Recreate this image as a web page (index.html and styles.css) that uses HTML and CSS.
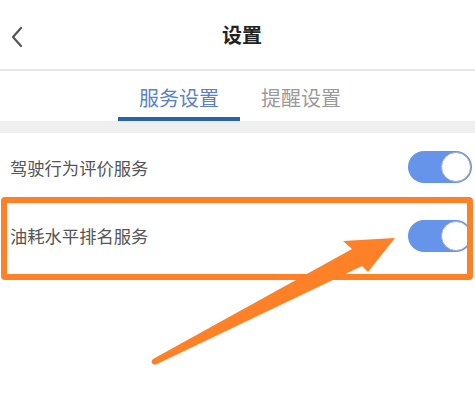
FILE: index.html
```html
<!DOCTYPE html>
<html lang="zh">
<head>
<meta charset="utf-8">
<link rel="stylesheet" href="styles.css">
</head>
<body>
<div class="page">
  <header class="topbar">
    <svg class="back" width="14" height="22" viewBox="0 0 14 22"><path d="M11 2 L3 11 L11 20" fill="none" stroke="#555" stroke-width="2.2" stroke-linecap="round" stroke-linejoin="round"/></svg>
    <h1 class="title">设置</h1>
  </header>
  <nav class="tabs">
    <div class="tab active">服务设置</div>
    <div class="tab">提醒设置</div>
  </nav>
  <div class="band"></div>
  <section class="list">
    <div class="row">
      <span class="label">驾驶行为评价服务</span>
      <span class="switch"><span class="knob"></span></span>
    </div>
    <div class="row">
      <span class="label">油耗水平排名服务</span>
      <span class="switch"><span class="knob"></span></span>
    </div>
  </section>
  <div class="highlight"></div>
  <svg class="arrow" width="475" height="409" viewBox="0 0 475 409">
    <path d="M395 238 L343 241 L352 249 L153 359 Q150 362 153 364 Q155 365 157 364 L362 266 L368 272 Z" fill="#ff8127"/>
  </svg>
</div>
</body>
</html>
```
FILE: styles.css
```css
html, body {
  margin: 0;
  padding: 0;
  background: #fff;
}
body {
  font-family: "Noto Sans CJK SC", "Noto Sans", sans-serif;
}
.page {
  position: relative;
  width: 475px;
  height: 409px;
  overflow: hidden;
}
.topbar {
  position: relative;
  height: 69px;
  display: flex;
  align-items: center;
  justify-content: center;
  border-bottom: 2px solid #e6e6e8;
}
.back {
  position: absolute;
  left: 10px;
  top: 26px;
}
.title {
  margin: 0 0 0 9px;
  font-size: 20px;
  font-weight: 700;
  color: #222;
  line-height: 1;
}
.tabs {
  height: 50px;
  display: flex;
  justify-content: center;
  padding-left: 5px;
}
.tab {
  width: 122px;
  box-sizing: border-box;
  text-align: center;
  font-size: 20px;
  line-height: 1;
  padding-top: 17px;
  color: #9a9a9a;
}
.tab.active {
  color: #5a80c6;
  border-bottom: 4px solid #2b5fb2;
}
.band {
  height: 12px;
  background: #efefef;
}
.list {
  display: flex;
  flex-direction: column;
}
.row {
  height: 69px;
  display: flex;
  align-items: center;
  justify-content: space-between;
  padding: 0 3px 0 10px;
}
.row:first-child {
  height: 68px;
}
.label {
  font-size: 17.3px;
  color: #555;
  letter-spacing: 0;
}
.switch {
  position: relative;
  width: 64px;
  height: 32px;
  border-radius: 16px;
  background: #6594ea;
  display: flex;
  justify-content: flex-end;
  align-items: center;
}
.knob {
  width: 30px;
  height: 30px;
  border-radius: 50%;
  background: #fff;
  border: 1px solid #a9adb6;
  box-sizing: border-box;
  margin-right: 1px;
}
.highlight {
  position: absolute;
  left: 1px;
  top: 197px;
  width: 472px;
  height: 83px;
  box-sizing: border-box;
  border: 6px solid #ff8127;
  border-radius: 4px;
}
.arrow {
  position: absolute;
  left: 0;
  top: 0;
}
```
